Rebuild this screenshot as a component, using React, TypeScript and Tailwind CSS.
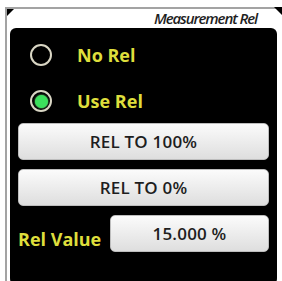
import React from "react";

function Radio({ on }: { on?: boolean }) {
  return (
    <div className="w-[22px] h-[22px] rounded-full border-[2.5px] border-[#d9d6c4] flex items-center justify-center bg-black">
      {on && (
        <div className="w-[13px] h-[13px] rounded-full bg-[#3be05c] shadow-[0_0_2px_#7cff8a]" />
      )}
    </div>
  );
}

function Btn({ children, className = "" }: { children: React.ReactNode; className?: string }) {
  return (
    <div
      className={
        "h-[37px] rounded-[5px] bg-gradient-to-b from-[#fbfbfb] to-[#dedede] border border-[#bdbdbd] flex items-center justify-center text-[17px] font-semibold text-[#1e1e1e] tracking-[0.2px] " +
        className
      }
      style={{ fontFamily: '"Open Sans", sans-serif' }}
    >
      {children}
    </div>
  );
}

export default function App() {
  return (
    <div className="w-[282px] h-[281px] bg-white overflow-hidden relative">
      <div className="absolute left-[0px] top-[0px] w-[282px] h-[290px] pl-[5px] pt-[7px]">
        <div className="relative w-full h-full border-l-2 border-t-2 border-[#a3a3a3] bg-white flex flex-col">
          <div className="absolute left-0 top-0 w-0 h-0 border-t-[7px] border-r-[7px] border-t-black border-r-transparent" />
          <div className="absolute right-0 top-[-2px] w-0 h-0 border-t-[8px] border-l-[8px] border-t-black border-l-transparent" />
          <div className="h-[19px] flex items-center justify-end pr-[25px]">
            <span
              className="italic font-semibold text-[15px] text-[#1f1f1f] tracking-[-1.1px] leading-none"
              style={{ fontFamily: '"Open Sans", sans-serif' }}
            >
              Measurement Rel
            </span>
          </div>
          <div className="ml-[3px] mr-[5px] flex-1 bg-black rounded-t-[6px] rounded-b-[12px] px-[8px] pt-[15px] flex flex-col">
            <div
              className="flex flex-col gap-[22px] ml-[12px]"
              style={{ fontFamily: '"Open Sans", sans-serif' }}
            >
              <div className="h-[24px] flex items-center gap-[25px]">
                <Radio />
                <span className="text-[18px] font-bold text-[#dede3c] leading-none">No Rel</span>
              </div>
              <div className="h-[24px] flex items-center gap-[25px]">
                <Radio on />
                <span className="text-[18px] font-bold text-[#dede3c] leading-none">Use Rel</span>
              </div>
            </div>
            <div className="mt-[10px] flex flex-col gap-[9px]">
              <Btn>REL TO 100%</Btn>
              <Btn>REL TO 0%</Btn>
              <div className="flex items-center">
                <span
                  className="text-[18px] font-bold text-[#dede3c] leading-none pt-[10px]"
                  style={{ fontFamily: '"Open Sans", sans-serif' }}
                >
                  Rel Value
                </span>
                <Btn className="ml-auto w-[159px]">15.000 %</Btn>
              </div>
            </div>
          </div>
        </div>
      </div>
    </div>
  );
}
